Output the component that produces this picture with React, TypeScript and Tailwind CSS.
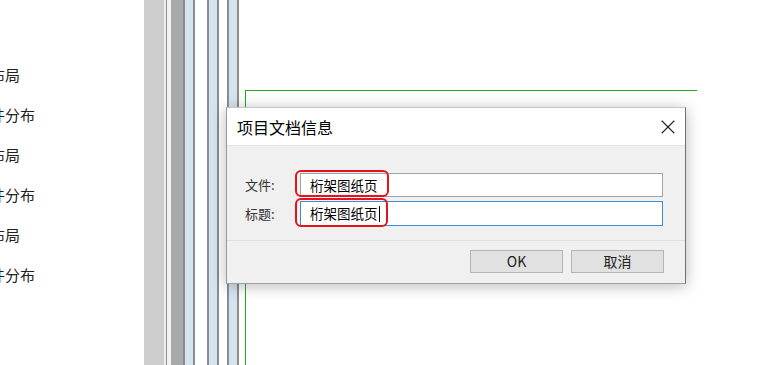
import { X } from "lucide-react";

const rows = ["布局", "件分布", "布局", "件分布", "布局", "件分布"];

const strips = [
    "w-[20px] bg-[#cdcdcd]",
    "w-[2px] bg-[#ececec]",
    "w-[1px] bg-[#8f8f8f]",
    "w-[4px] bg-[#f2f2f2]",
    "w-[12px] bg-[#a9a9a9]",
    "w-[2px] bg-[#8c8c8c]",
    "w-[8px] bg-[#d6e3f0]",
    "w-[2px] bg-[#8c8c8c]",
    "w-[12px] bg-white",
    "w-[2px] bg-[#8c8c8c]",
    "w-[8px] bg-[#d6e3f0]",
    "w-[2px] bg-[#8c8c8c]",
    "w-[8px] bg-white",
    "w-[2px] bg-[#8c8c8c]",
    "w-[8px] bg-[#d6e3f0]",
    "w-[2px] bg-[#8c8c8c]",
];

export default function App() {
    return (
        <div
            className="relative flex h-[365px] w-[757px] overflow-hidden bg-white text-black"
            style={{ fontFamily: '"Noto Sans CJK SC", "Noto Sans", sans-serif' }}
        >
            <div className="w-[144px] shrink-0 overflow-hidden pt-[65px]">
                <div className="ml-[-10px] flex flex-col gap-[20px]">
                    {rows.map((r, i) => (
                        <div key={i} className="h-[20px] whitespace-nowrap text-[15px] leading-[20px] text-[#222]">
                            {r}
                        </div>
                    ))}
                </div>
            </div>

            {strips.map((s, i) => (
                <div key={i} className={`h-full shrink-0 ${s}`}></div>
            ))}

            <div className="flex-1 pl-[6px] pt-[90px]">
                <div className="h-full w-[452px] border-l-[1.5px] border-t-[1.5px] border-[#22a822]"></div>
            </div>

            {/* dialog */}
            <div className="absolute left-[226px] top-[107px] flex h-[177px] w-[460px] flex-col border border-l-[#9a9a9a] border-t-[#c8c8c8] border-r-[#707070] border-b-[#a0a0a0] bg-[#f0f0f0] shadow-[0_2px_14px_rgba(0,0,0,0.28)]">
                <div className="flex h-[38px] items-center justify-between border-b border-[#e4e4e4] bg-white pl-[10px] pr-[5px]">
                    <span className="text-[16px] text-black">项目文档信息</span>
                    <X size={24} strokeWidth={1.1} className="text-[#222]" />
                </div>

                <div className="relative flex flex-1 flex-col gap-[4px] pl-[18px] pr-[22px] pt-[27px]">
                    <div className="flex items-center">
                        <span className="w-[55px] text-[13px] text-[#333]">文件:</span>
                        <div className="flex h-[24px] flex-1 items-center border border-[#a3a3a3] bg-white pl-[9px] text-[13.5px]">
                            桁架图纸页
                        </div>
                    </div>
                    <div className="flex items-center">
                        <span className="w-[55px] text-[13px] text-[#333]">标题:</span>
                        <div className="flex h-[25px] flex-1 items-center border border-[#3b8fd8] bg-white pl-[9px] text-[13.5px]">
                            桁架图纸页
                            <span className="ml-[1px] inline-block h-[16px] w-[1px] bg-black"></span>
                        </div>
                    </div>

                    <div className="absolute left-[68px] top-[24px] h-[27px] w-[94px] rounded-[6px] border-2 border-[#e5141b]"></div>
                    <div className="absolute left-[68px] top-[52px] h-[29px] w-[93px] rounded-[6px] border-2 border-[#e5141b]"></div>
                </div>

                <div className="flex h-[43px] items-start justify-end gap-[8px] border-t border-[#dfdfdf] pr-[21px] pt-[9px]">
                    <button className="h-[23px] w-[93px] border border-[#b5b5b5] bg-[#e1e1e1] text-[14px] text-[#222]">OK</button>
                    <button className="h-[23px] w-[93px] border border-[#b5b5b5] bg-[#e1e1e1] text-[14px] text-[#222]">取消</button>
                </div>
            </div>
        </div>
    );
}
